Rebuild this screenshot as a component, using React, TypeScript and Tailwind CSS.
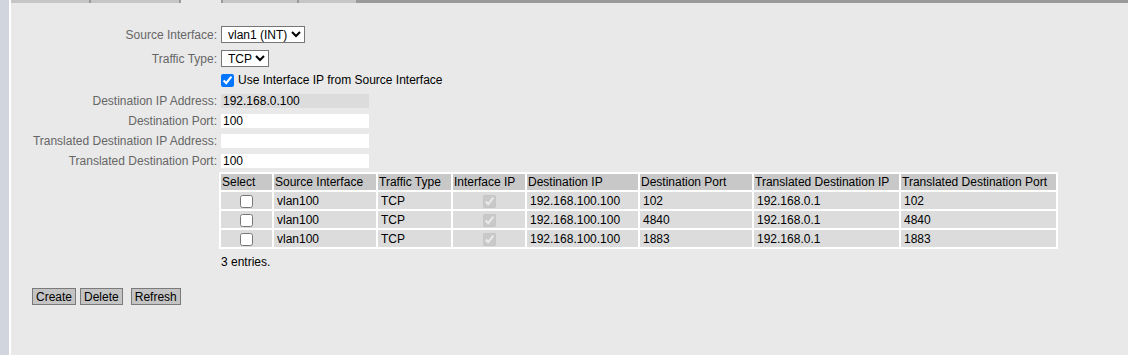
import React from "react";

const rows = [
  { si: "vlan100", tt: "TCP", dip: "192.168.100.100", dp: "102", tdip: "192.168.0.1", tdp: "102" },
  { si: "vlan100", tt: "TCP", dip: "192.168.100.100", dp: "4840", tdip: "192.168.0.1", tdp: "4840" },
  { si: "vlan100", tt: "TCP", dip: "192.168.100.100", dp: "1883", tdip: "192.168.0.1", tdp: "1883" },
];

function Label({ children }: { children: React.ReactNode }) {
  return <div className="w-[206px] shrink-0 text-right text-[#666]">{children}</div>;
}

export default function App() {
  return (
    <div
      className="flex w-[1128px] h-[355px] bg-[#e9e9e9] text-[12px] leading-[14px] text-black overflow-hidden"
      style={{ fontFamily: '"Liberation Sans", Arial, sans-serif' }}
    >
      <div className="w-[9px] shrink-0 bg-[#d1d5de]" />
      <div className="w-[2px] shrink-0 bg-white" />
      <div className="flex-1 flex flex-col">
        {/* tab bar */}
        <div className="flex h-[3px] bg-[#9a9a9a]">
          <div className="w-[78px] bg-[#c6c6c6]" />
          <div className="w-[2px] bg-[#9a9a9a]" />
          <div className="w-[88px] bg-[#c6c6c6]" />
          <div className="w-[2px] bg-[#9a9a9a]" />
          <div className="w-[40px] bg-[#e9e9e9]" />
          <div className="w-[2px] bg-[#9a9a9a]" />
          <div className="w-[74px] bg-[#c6c6c6]" />
          <div className="w-[2px] bg-[#9a9a9a]" />
          <div className="w-[57px] bg-[#c6c6c6]" />
        </div>

        <div className="flex items-center gap-[4px] mt-[23px] h-[17px]">
          <Label>Source Interface:</Label>
          <select className="h-[17px] border border-[#767676] bg-white text-black text-[12px] pl-[2px]" defaultValue="vlan1">
            <option value="vlan1">vlan1 (INT)</option>
          </select>
        </div>
        <div className="flex items-center gap-[4px] mt-[7px] h-[17px]">
          <Label>Traffic Type:</Label>
          <select className="h-[17px] border border-[#767676] bg-white text-black text-[12px] pl-[2px]" defaultValue="TCP">
            <option value="TCP">TCP</option>
          </select>
        </div>
        <div className="flex items-center gap-[4px] mt-[6px] h-[14px]">
          <div className="w-[206px] shrink-0" />
          <input type="checkbox" defaultChecked className="w-[13px] h-[13px] m-0" />
          <span>Use Interface IP from Source Interface</span>
        </div>
        <div className="flex items-center gap-[4px] mt-[7px] h-[14px]">
          <Label>Destination IP Address:</Label>
          <input readOnly value="192.168.0.100" className="h-[14px] w-[148px] bg-[#dcdcdc] px-[2px] text-[12px] outline-none" />
        </div>
        <div className="flex items-center gap-[4px] mt-[6px] h-[14px]">
          <Label>Destination Port:</Label>
          <input defaultValue="100" className="h-[14px] w-[148px] bg-white px-[2px] text-[12px] outline-none" />
        </div>
        <div className="flex items-center gap-[4px] mt-[6px] h-[14px]">
          <Label>Translated Destination IP Address:</Label>
          <input defaultValue="" className="h-[14px] w-[148px] bg-white px-[2px] text-[12px] outline-none" />
        </div>
        <div className="flex items-center gap-[4px] mt-[6px] h-[14px]">
          <Label>Translated Destination Port:</Label>
          <input defaultValue="100" className="h-[14px] w-[148px] bg-white px-[2px] text-[12px] outline-none" />
        </div>

        <table className="ml-[208px] mt-[4px] border-separate border-spacing-[2px] bg-white w-[839px] table-fixed">
          <colgroup>
            <col className="w-[51px]" />
            <col className="w-[102px]" />
            <col className="w-[73px]" />
            <col className="w-[72px]" />
            <col className="w-[111px]" />
            <col className="w-[112px]" />
            <col className="w-[145px]" />
            <col className="w-[155px]" />
          </colgroup>
          <thead>
            <tr className="h-[16px]">
              {["Select", "Source Interface", "Traffic Type", "Interface IP", "Destination IP", "Destination Port", "Translated Destination IP", "Translated Destination Port"].map((h) => (
                <th key={h} className="bg-[#c8c8c8] text-left font-normal pl-[1px] pr-0 py-0 whitespace-nowrap">{h}</th>
              ))}
            </tr>
          </thead>
          <tbody>
            {rows.map((r, i) => (
              <tr key={i} className="h-[17px]">
                <td className="bg-[#dcdcdc] p-0 text-center align-middle">
                  <input type="checkbox" className="w-[13px] h-[13px] m-0 align-middle" />
                </td>
                <td className="bg-[#dcdcdc] px-[3px] py-0">{r.si}</td>
                <td className="bg-[#dcdcdc] px-[3px] py-0">{r.tt}</td>
                <td className="bg-[#dcdcdc] p-0 text-center align-middle">
                  <input type="checkbox" checked disabled readOnly className="w-[13px] h-[13px] m-0 align-middle" />
                </td>
                <td className="bg-[#dcdcdc] px-[3px] py-0">{r.dip}</td>
                <td className="bg-[#dcdcdc] px-[3px] py-0">{r.dp}</td>
                <td className="bg-[#dcdcdc] px-[3px] py-0">{r.tdip}</td>
                <td className="bg-[#dcdcdc] px-[3px] py-0">{r.tdp}</td>
              </tr>
            ))}
          </tbody>
        </table>

        <div className="ml-[210px] mt-[6px] h-[14px]">3 entries.</div>

        <div className="flex ml-[21px] mt-[19px]">
          <button className="h-[17px] px-[3px] bg-[#c4c4c4] border border-[#7a7a7a] text-[12px] leading-[14px]">Create</button>
          <button className="ml-[4px] h-[17px] px-[3px] bg-[#c4c4c4] border border-[#7a7a7a] text-[12px] leading-[14px]">Delete</button>
          <button className="ml-[8px] h-[17px] px-[3px] bg-[#c4c4c4] border border-[#7a7a7a] text-[12px] leading-[14px]">Refresh</button>
        </div>
      </div>
    </div>
  );
}
